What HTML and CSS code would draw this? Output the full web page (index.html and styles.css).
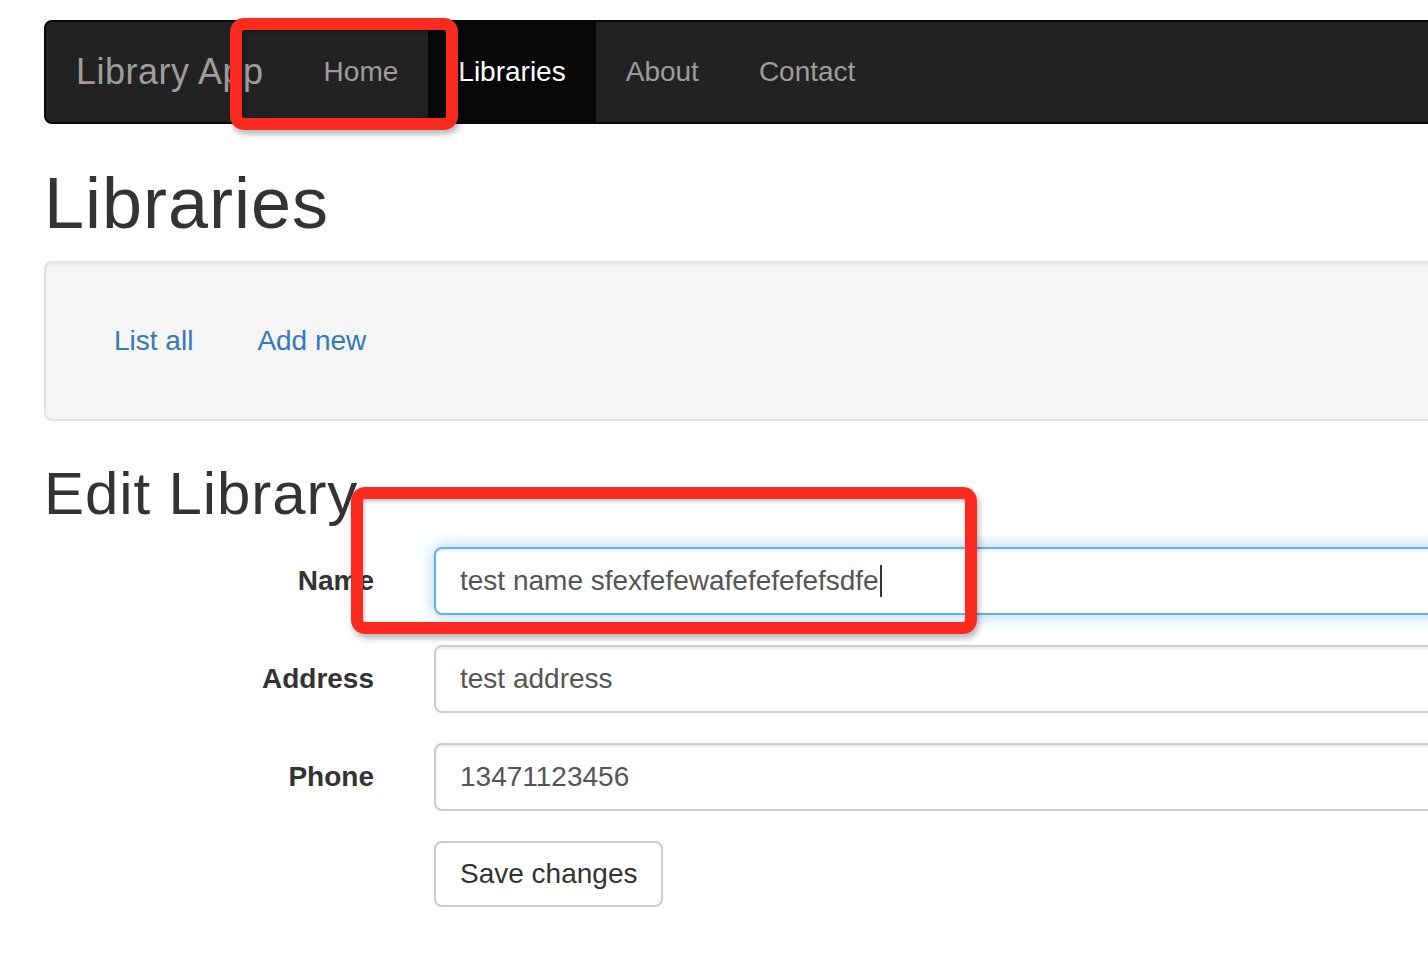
FILE: index.html
```html
<!DOCTYPE html>
<html lang="en">
<head>
<meta charset="utf-8">
<title>Library App</title>
<link rel="stylesheet" href="styles.css">
</head>
<body>
<div class="container">
  <nav class="navbar">
    <a class="brand" href="#">Library App</a>
    <ul class="nav">
      <li><a href="#">Home</a></li>
      <li class="active"><a href="#">Libraries</a></li>
      <li><a href="#">About</a></li>
      <li><a href="#">Contact</a></li>
    </ul>
  </nav>

  <h1 class="page-title">Libraries</h1>

  <div class="well">
    <ul class="pills">
      <li><a href="#">List all</a></li>
      <li><a href="#">Add new</a></li>
    </ul>
  </div>

  <h2 class="section-title">Edit Library</h2>

  <form class="form">
    <div class="form-group">
      <label class="label">Name</label>
      <div class="field focused"><span class="field-text">test name sfexfefewafefefefefsdfe</span><span class="caret"></span></div>
    </div>
    <div class="form-group">
      <label class="label">Address</label>
      <div class="field"><span class="field-text">test address</span></div>
    </div>
    <div class="form-group">
      <label class="label">Phone</label>
      <div class="field"><span class="field-text">13471123456</span></div>
    </div>
    <div class="form-group">
      <span class="label"></span>
      <div><button type="button" class="btn">Save changes</button></div>
    </div>
  </form>
</div>

<div class="annotation annotation-nav"></div>
<div class="annotation annotation-name"></div>
</body>
</html>
```

FILE: styles.css
```css
* { box-sizing: border-box; }

html, body {
  margin: 0;
  padding: 0;
  overflow: hidden;
  background: #fff;
}

body {
  font-family: "Liberation Sans", Arial, Helvetica, sans-serif;
  font-size: 28px;
  line-height: 40px;
  color: #333;
  width: 1428px;
  height: 968px;
  position: relative;
}

.container {
  width: 2280px;
  margin-left: 44px;
  padding-top: 20px;
}

/* Navbar */
.navbar {
  display: flex;
  align-items: stretch;
  height: 104px;
  background: #222;
  border: 2px solid #080808;
  border-radius: 8px;
  margin-bottom: 40px;
}

.brand {
  display: block;
  padding: 30px 30px;
  font-size: 36px;
  line-height: 40px;
  letter-spacing: 0.5px;
  color: #9d9d9d;
  text-decoration: none;
}

.nav {
  display: flex;
  list-style: none;
  margin: 0;
  padding: 0;
}

.nav li a {
  display: block;
  padding: 30px 30px;
  line-height: 40px;
  color: #9d9d9d;
  text-decoration: none;
}

.nav li.active a {
  background: #080808;
  color: #fff;
}

/* Headings */
.page-title {
  margin: 40px 0 18px;
  font-size: 72px;
  line-height: 79px;
  font-weight: 400;
  letter-spacing: 1px;
  color: #333;
}

.section-title {
  margin: 40px 0 20px;
  font-size: 60px;
  line-height: 66px;
  font-weight: 400;
  letter-spacing: 0.9px;
  color: #333;
}

/* Well */
.well {
  background: #f5f5f5;
  border: 2px solid #e3e3e3;
  border-radius: 8px;
  padding: 38px;
  box-shadow: inset 0 2px 2px rgba(0, 0, 0, 0.05);
  margin-bottom: 40px;
}

.pills {
  display: flex;
  gap: 4px;
  list-style: none;
  margin: 0;
  padding: 0;
}

.pills li a {
  display: block;
  padding: 20px 30px;
  line-height: 40px;
  color: #337ab7;
  text-decoration: none;
  border-radius: 8px;
}

/* Form */
.form-group {
  display: grid;
  grid-template-columns: 330px 1fr;
  column-gap: 60px;
  margin-bottom: 30px;
}

.label {
  text-align: right;
  font-weight: 700;
  padding-top: 14px;
  line-height: 40px;
}

.field {
  display: flex;
  align-items: center;
  height: 68px;
  padding: 12px 24px;
  border: 2px solid #ccc;
  border-radius: 8px;
  background: #fff;
  color: #555;
  font-size: 28px;
  line-height: 40px;
  box-shadow: inset 0 2px 2px rgba(0, 0, 0, 0.075);
}

.field.focused {
  border-color: #66afe9;
  box-shadow: inset 0 2px 2px rgba(0, 0, 0, 0.075), 0 0 16px rgba(102, 175, 233, 0.6);
}

.caret {
  display: inline-block;
  width: 2px;
  height: 32px;
  background: #333;
  margin-left: 1px;
}

.btn {
  font-family: inherit;
  font-size: 28px;
  line-height: 38px;
  padding: 12px 24px;
  border: 2px solid #ccc;
  border-radius: 8px;
  background: #fff;
  color: #333;
}

/* Red annotation boxes drawn over the screenshot */
.annotation {
  position: absolute;
  border: 12px solid #fb2a1f;
  border-radius: 14px;
  box-shadow: 2px 4px 6px rgba(0, 0, 0, 0.3), inset 1px 2px 4px rgba(0, 0, 0, 0.25);
}

.annotation-nav {
  left: 230px;
  top: 18px;
  width: 228px;
  height: 112px;
}

.annotation-name {
  left: 351px;
  top: 487px;
  width: 626px;
  height: 147px;
}
```
